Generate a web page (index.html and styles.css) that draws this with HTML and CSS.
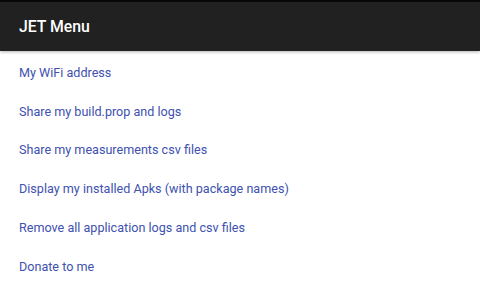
FILE: index.html
```html
<!DOCTYPE html>
<html lang="en">
<head>
    <meta charset="UTF-8">
    <meta name="viewport" content="width=device-width, initial-scale=1.0">
    <title>JET Menu</title>
    <link rel="stylesheet" href="styles.css">
</head>
<body>
    <div class="status-strip"></div>
    <header class="app-bar">
        <h1>JET Menu</h1>
    </header>
    <ul class="menu-list">
        <li>My WiFi address</li>
        <li>Share my build.prop and logs</li>
        <li>Share my measurements csv files</li>
        <li>Display my installed Apks (with package names)</li>
        <li>Remove all application logs and csv files</li>
        <li>Donate to me</li>
    </ul>
</body>
</html>
```

FILE: styles.css
```css
body {
    font-family: Roboto, "Noto Sans", sans-serif;
    margin: 0;
    padding: 0;
    background-color: #fff;
}
.status-strip {
    height: 2px;
    background-color: #080808;
}
.app-bar {
    height: 49px;
    background-color: #212121;
    display: flex;
    align-items: center;
    padding: 0 19px 1px 19px;
    box-sizing: border-box;
    box-shadow: 0 1px 3px rgba(0, 0, 0, 0.3);
    position: relative;
}
.app-bar h1 {
    margin: 0;
    color: #fff;
    font-size: 15.8px;
    font-weight: 500;
}
.menu-list {
    list-style: none;
    margin: 0;
    padding: 2px 0 0 0;
}
.menu-list li {
    height: 38.8px;
    display: flex;
    align-items: center;
    padding: 0 19px;
    color: #4051b0;
    font-size: 12.6px;
}
```
